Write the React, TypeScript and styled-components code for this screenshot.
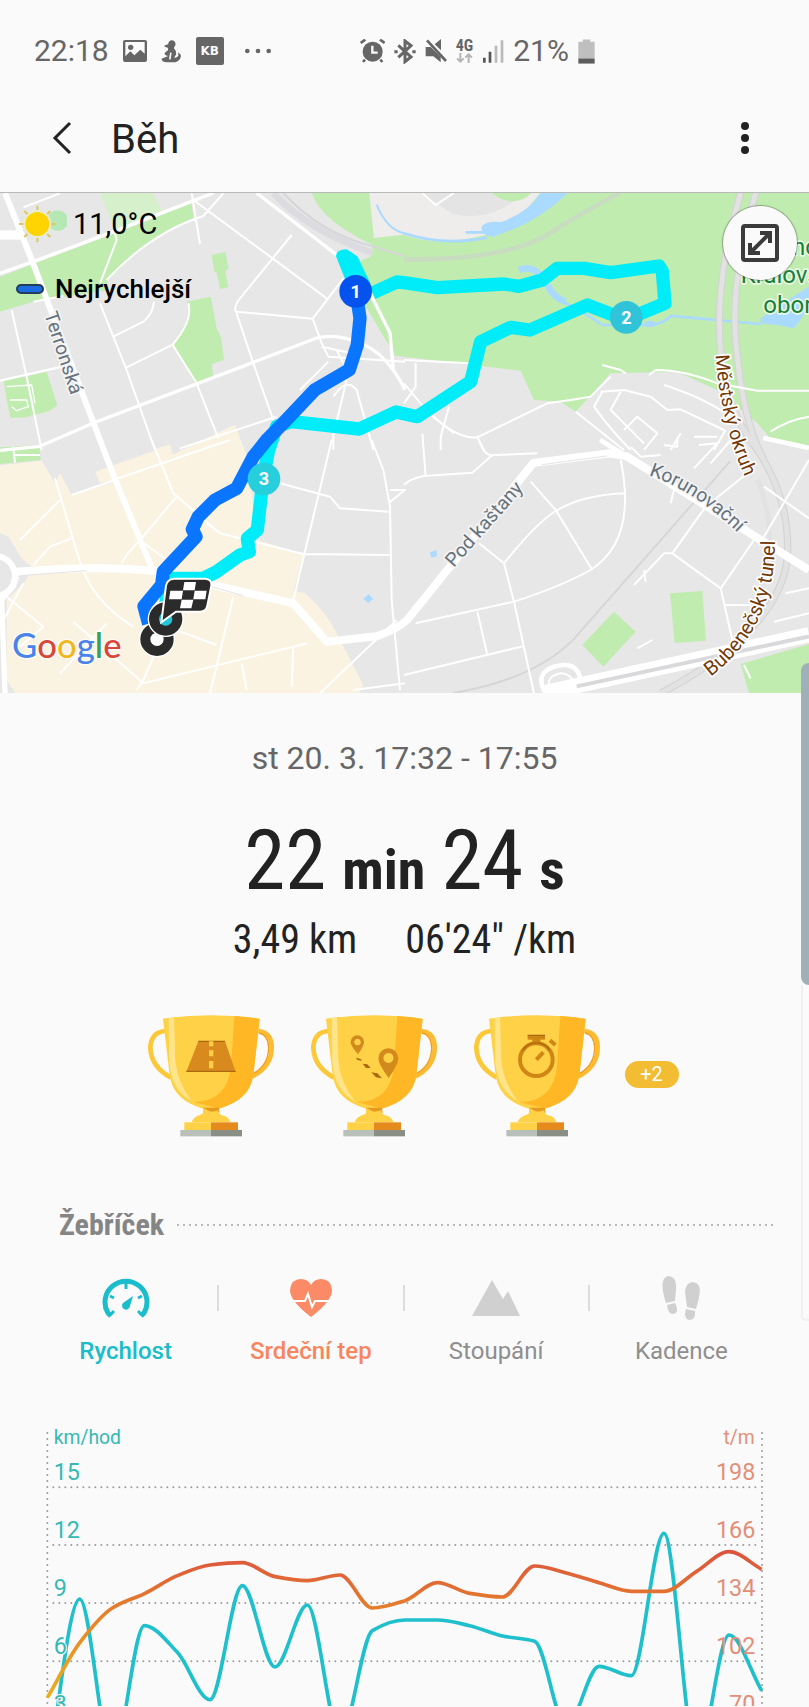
import React, { useState } from 'react';
import styled, { createGlobalStyle } from 'styled-components';

const GlobalStyle = createGlobalStyle`
  * { box-sizing: border-box; }
  body { margin: 0; background: #fafafa; }
  button { font: inherit; color: inherit; border: 0; padding: 0; background: none; cursor: pointer; }
`;

const CONDENSED = '"Roboto Condensed", Roboto, sans-serif';

const Screen = styled.main`
  position: relative;
  background: #fafafa;
  color: #222;
  font-family: Roboto, sans-serif;
  overflow: hidden;
`;

/* ---------- status bar ---------- */

const StatusBar = styled.div`
  display: flex;
  align-items: center;
  padding: 34px 34px 16px;
  color: #666;
  font-size: 30px;
  line-height: 34px;
`;

const StatusGroup = styled.div<{ $gap: number; $start?: number }>`
  display: flex;
  align-items: center;
  gap: ${(p) => p.$gap}px;
  margin-left: ${(p) => p.$start ?? 0}px;
`;

const Glyph = styled.svg<{ $w: number; $h: number }>`
  display: block;
  flex: none;
  width: ${(p) => p.$w}px;
  height: ${(p) => p.$h}px;
`;

const AppBadge = styled.span`
  width: 28px;
  height: 28px;
  border-radius: 2px;
  background: #666;
  color: #fafafa;
  font: 700 12px/28px "DejaVu Sans", sans-serif;
  text-align: center;
`;

const Network = styled.div`
  display: flex;
  flex-direction: column;
  align-items: center;
  font: 700 16px/14px "Roboto Condensed", sans-serif;
`;

/* ---------- header ---------- */

const Header = styled.header`
  display: flex;
  align-items: center;
  height: 109px;
  padding: 0 44px 0 42px;
  border-bottom: 1px solid #b9b9b9;
`;

const IconButton = styled.button`
  display: flex;
  align-items: center;
  justify-content: center;
  width: 40px;
  height: 48px;
`;

const Title = styled.h1`
  flex: 1;
  margin: 4px 0 0 29px;
  font-size: 40px;
  font-weight: 400;
  line-height: 48px;
`;

/* ---------- map ---------- */

const MapPanel = styled.section`
  position: relative;
`;

const Drawing = styled.svg`
  display: block;
  width: 100%;
  height: auto;
`;

const MapInfo = styled.div`
  position: absolute;
  top: 11px;
  left: 16px;
  display: flex;
  flex-direction: column;
  gap: 29px;
  color: #000;
`;

const InfoRow = styled.div<{ $gap: number; $size: number; $weight?: number }>`
  display: flex;
  align-items: center;
  gap: ${(p) => p.$gap}px;
  font-size: ${(p) => p.$size}px;
  font-weight: ${(p) => p.$weight ?? 400};
  line-height: 32px;
`;

const FastChip = styled.span`
  width: 28px;
  height: 10px;
  border: 2px solid #243c5c;
  border-radius: 5px;
  background: #1a6ae0;
`;

const ExpandButton = styled.button`
  position: absolute;
  top: 13px;
  right: 12px;
  display: flex;
  align-items: center;
  justify-content: center;
  width: 74px;
  height: 74px;
  border-radius: 50%;
  background: #fafafa;
  box-shadow: 0 0 1px 1px rgba(0, 0, 0, 0.3);
`;

/* ---------- summary ---------- */

const Summary = styled.section`
  display: flex;
  flex-direction: column;
  align-items: center;
  padding-top: 45px;
`;

const DateLine = styled.time`
  color: #666;
  font-size: 32px;
  line-height: 40px;
`;

const Duration = styled.div`
  display: flex;
  align-items: baseline;
  gap: 16px;
  margin-top: 35px;
  font: 400 83px/96px ${CONDENSED};
`;

const Unit = styled.b`
  font-size: 56px;
  font-weight: 700;
  line-height: 60px;
`;

const Stats = styled.div`
  display: flex;
  gap: 48px;
  margin-top: 7px;
  font: 400 40px/48px ${CONDENSED};
`;

const Trophies = styled.div`
  display: flex;
  align-items: center;
  gap: 35px;
  margin-top: 50px;
  padding-left: 16px;
`;

const MoreBadge = styled.button`
  width: 54px;
  height: 27px;
  margin: 0 0 3px -11px;
  border-radius: 14px;
  background: #f2bc33;
  color: #fff;
  font-size: 20px;
  line-height: 27px;
`;

/* ---------- ranking ---------- */

const SectionHead = styled.div`
  display: flex;
  align-items: center;
  gap: 13px;
  margin-top: 70px;
  padding: 0 36px 0 59px;
`;

const SectionTitle = styled.h2`
  margin: 0;
  color: #858585;
  font: 700 30px/36px ${CONDENSED};
`;

const DottedRule = styled.span`
  flex: 1;
  height: 2px;
  background: repeating-linear-gradient(90deg, #b9b9b9 0 2px, transparent 2px 6px);
`;

const Tabs = styled.div`
  display: flex;
  margin-top: 33px;
  padding: 0 35px 0 33px;
`;

const TabButton = styled.button<{ $color: string; $on: boolean }>`
  flex: 1;
  display: flex;
  flex-direction: column;
  align-items: center;
  gap: 17px;
  color: ${(p) => p.$color};
  font-size: 24px;
  font-weight: ${(p) => (p.$on ? 500 : 400)};
  line-height: 28px;
`;

const Divider = styled.span`
  width: 2px;
  height: 26px;
  margin: 9px -1px 0;
  background: #dcdcdc;
`;

const ChartPanel = styled.section`
  margin: 44px 30px 0;
`;

const ScrollThumb = styled.span`
  position: absolute;
  top: 663px;
  right: 0;
  width: 8px;
  height: 322px;
  border-radius: 8px 0 0 8px;
  background: #9fb0b9;
`;

const ScrollTrack = styled.span`
  position: absolute;
  top: 985px;
  right: 0;
  width: 8px;
  height: 336px;
  border: 2px solid #f0f0f0;
  border-top: 0;
  border-right: 0;
  border-radius: 0 0 0 5px;
`;

/* ---------- map drawing ---------- */

const CYAN_ROUTE =
  'M1118 300L1190 267L1212 269L1312 284L1512 273L1557 280L1627 261L1672 226L1752 226L1832 239L1977 219L1987 235L1995 331L1877 380L1762 336L1590 411L1532 403L1442 446L1412 566L1252 671L1188 657L1078 708L875 686L830 700L806 771L790 851L772 1011L742 1036L748 1076L720 1086L650 1136L610 1156L510 1156L490 1280';
const BLUE_ROUTE =
  'M1068 296L1080 375L1072 455L1048 530L945 590L860 680L800 741L760 791L710 886L645 921L595 971L577 1009L588 1031L490 1136L485 1176L432 1240L446 1292';

const MapDrawing = () => (
  <Drawing viewBox="0 0 2427 1500" role="img" aria-label="Mapa trasy běhu">
    <defs>
      <path id="terronska" d="M132 372L215 625" />
      <path id="kastany" d="M149 384L363 142" />
      <path id="korun" d="M734 106Q866 148 1006 283" />
      <path id="okruh" d="M2147 486Q2160 690 2243 870" />
      <path id="tunel" d="M920 710Q1118 560 1113 290" />
    </defs>
    <rect width="2427" height="1500" fill="#e7e7e7" />

    {/* land use */}
    <g fill="#c0ecb0">
      <g transform="translate(0 -9)">
        <path d="M0 260L105 220L345 130L575 40L580 85L520 110Q430 160 320 275L325 300L100 335L0 365Z" />
        <path d="M635 195L676 186L686 236L676 242L685 292L660 297L650 248L642 244Z" />
        <path d="M560 335L632 320L650 415L664 445L672 510L635 522L640 562L586 582L518 464Q570 390 568 350Z" />
        <path d="M12 572L140 546L172 645L150 662L78 682L32 684L20 630Z" />
        <path d="M0 772L115 766L118 780H0Z" />
        <path d="M300 9H460L485 62L345 120Z" fill="#d5f0cb" />
        <path d="M936 9H1110L1122 145L1215 120V500L1185 497L1095 345L1040 230L1110 200L1118 165Q960 90 936 9Z" />
      </g>
      <g transform="translate(1212 -9)">
        <path d="M0 9H1215V780L1100 745L1060 700L1000 650L960 610L820 545L620 550L575 600L515 665L470 635L390 630L350 542L0 500Z" />
        <path d="M1060 640L1110 750L1215 765V600Z" />
      </g>
      <g transform="translate(0 741)">
        <path d="M0 25L118 15L122 60L0 72Z" />
      </g>
      <g transform="translate(1212 741)">
        <path d="M535 614L630 515L695 575L598 680Z" />
        <path d="M798 460L895 453L906 602L812 609Z" />
        <path d="M1010 672L1215 612V760H1035Z" />
        <path d="M1085 0H1215V22Z" />
      </g>
    </g>
    <path d="M1108 0H1620Q1540 110 1430 132Q1310 160 1212 125L1122 135Z" fill="#eeedeb" />
    <path d="M1260 0H1570Q1480 90 1360 64Z" fill="#e4e4e4" />
    <path d="M1475 0H1595Q1540 50 1475 0Z" fill="#c0ecb0" />
    <path d="M1940 640L2010 590L2060 640L2190 690L2140 640L2040 555L1830 541Z" fill="#e7e7e7" />
    <g transform="translate(0 741)" fill="#faf3e1">
      <path d="M0 76L125 62L165 130L180 100L215 165L345 125L300 128L285 95L470 30L510 14L518 44L690 -40L705 -45L745 60L770 300L912 342L880 452L915 460Q985 520 1020 600L1090 735L1075 765H50L20 720V480L75 425L100 385L65 355L25 290L0 278Z" />
      <path d="M470 25L510 14L518 44L480 55Z" />
    </g>

    {/* water */}
    <g transform="translate(1212 -9)" fill="#aadaff">
      <path d="M410 9H490Q400 100 265 140Q225 135 234 108Q250 92 290 96Q370 70 410 9Z" />
      <path d="M1070 385L1150 330L1215 290V350L1185 395L1170 415L1120 405L1070 400Z" />
      <path
        d="M0 130Q120 170 250 142M185 127H240M345 240Q390 225 420 275Q440 330 485 340Q530 360 595 405L740 405Q780 400 800 378L1070 402"
        fill="none"
        stroke="#aadaff"
        strokeWidth="8"
      />
      <path d="M345 240Q380 225 410 255M430 285Q450 325 485 335" fill="none" stroke="#aadaff" strokeWidth="20" />
      <ellipse cx="738" cy="402" rx="18" ry="10" />
    </g>
    <path d="M1130 35Q1160 110 1215 122" fill="none" stroke="#aadaff" strokeWidth="6" />
    <path d="M1290 1078L1310 1072L1310 1090L1294 1094Z" fill="#aadaff" />
    <path d="M1090 1217L1105 1204L1120 1217L1105 1230Z" fill="#aadaff" />

    {/* railways and tunnels */}
    <g fill="none" stroke="#d6d6d8" strokeWidth="6">
      <path d="M820 0Q920 110 1118 180" stroke="#dcdce0" strokeWidth="20" />
      <path d="M850 0Q960 120 1118 160L1215 190" />
      <path d="M1212 200Q1530 200 1650 120Q1760 50 1860 0" stroke="#c8dcc0" strokeWidth="14" />
      <path d="M1360 1500Q1600 1460 1720 1340L2190 805" />
    </g>
    <g transform="translate(1212 -9)" fill="none" stroke="#d4d4d4" strokeWidth="22">
      <path d="M1010 9Q930 280 950 480Q960 650 1060 780Q1160 930 1150 1100Q1130 1320 770 1510" />
      <path d="M1055 9Q970 300 1000 500Q1020 700 1080 810" />
      <path
        d="M1010 9Q930 280 950 480Q960 650 1060 780Q1160 930 1150 1100Q1130 1320 770 1510M1055 9Q970 300 1000 500Q1020 700 1080 810M1062 870Q1110 1000 1090 1100Q1060 1330 900 1440"
        stroke="#e2e2e2"
        strokeWidth="15"
      />
    </g>

    {/* minor streets */}
    <g fill="none" stroke="#fff" strokeWidth="6" strokeLinejoin="round">
      <g transform="translate(0 -9)">
        <path d="M70 52L180 10M575 10L600 162M100 335L190 318M300 280L350 150L345 130M320 270Q450 130 610 78L670 10M580 30L960 310L985 330M875 135L720 325Q700 350 708 365L938 386M708 365L760 520L820 690M938 386L1030 265M938 386L965 460L985 500L1215 515M35 360L80 560L125 780M300 340L380 540L465 780M340 440L430 395Q460 370 462 335M380 532L518 464Q580 390 565 340M518 464L590 580L655 745M540 775L830 680M1000 780V735L1040 570M1120 780L1070 600Q1040 560 1000 620M965 470L1080 495M1010 480L1030 520M985 515L900 600" />
        <path d="M20 590L95 585L105 640M30 630H80L85 650L50 662L35 650" strokeWidth="4" />
      </g>
      <g transform="translate(1212 -9)">
        <path d="M55 9L95 45L150 9M0 510L200 520M35 520V590L0 640M0 580L50 640Q150 750 220 742L430 640L500 630L560 620L620 560M220 742L240 780M135 650L110 740V780M80 675L150 730M595 525L650 540L665 550M735 555L755 540Q840 540 940 580L1060 602H1215M590 605L660 600L740 620L790 660L830 658L960 720M780 585Q920 630 990 690M595 605L570 650Q620 720 680 780M515 665L660 780M660 720L700 680L760 730L720 780M1100 725Q1150 690 1215 680M870 740L940 740M830 730L800 780M650 605L620 660L720 760M930 780L965 720" />
      </g>
      <g transform="translate(0 741)">
        <path d="M455 0L520 160L660 280L910 342L1170 345M340 120L690 0M215 165L345 120M530 170L420 300L500 360M40 20L45 68M45 45H120M165 115L235 350Q270 480 400 560M180 180L60 300M215 295L150 320L100 375M420 300Q380 340 365 370M620 250L660 280M995 0L880 480M840 130L990 170L1020 205L1165 215M1115 0L1150 90L1170 200L1175 480L1200 750M1170 150H1215L1165 190M700 470L630 760M650 615L500 560L430 720L410 750M0 560L70 430M20 470L130 560L60 620M220 545L430 730L880 620L920 610M725 670L740 750M880 620L875 740M1190 540L960 760M1060 750L1215 730M320 550L180 700" />
      </g>
      <g transform="translate(1212 741)">
        <path d="M55 -20L65 110M225 0Q240 50 270 45L400 40M265 45L205 98L60 108Q20 115 0 135M380 125L455 210L565 390M650 60Q700 300 560 390Q470 440 330 485L35 550M660 160Q540 165 460 210Q400 245 300 370M225 310L300 370L330 485L390 760M220 515L250 645M0 705L360 618M590 0L660 50M680 20L710 50L770 45M820 0V20L780 15M885 15L940 10L870 85M810 150L800 190M1030 100L905 200L805 340L780 340L690 435M805 340L950 445L1050 300M950 445L985 600M965 495H1040M1215 60L1080 290M1080 140L1215 235M1110 545L1215 520M1145 460L1215 445M720 390L725 425M700 625L745 600M980 0L920 70M1020 675L1040 715" />
        <path d="M425 760Q390 700 450 680Q520 660 530 720" strokeWidth="14" />
        <path d="M440 750Q420 710 470 700Q500 700 510 730" strokeWidth="6" />
      </g>
    </g>

    {/* main streets */}
    <g fill="none" stroke="#fff" strokeLinejoin="round">
      <g strokeWidth="10">
        <path d="M0 241L100 206L350 112L640 0M770 0L1080 240L1170 420L1180 530M0 772L120 760L280 690L760 508L950 435Q1010 420 1080 450Q1160 480 1215 590" />
        <path d="M0 563L190 520" strokeWidth="7" />
      </g>
      <path d="M15 0L95 200L300 741L342 851L460 1136" strokeWidth="18" />
      <path d="M0 126H60" strokeWidth="28" />
      <circle cx="-15" cy="1149" r="60" strokeWidth="18" fill="#e7e7e7" />
      <path d="M50 1150L40 1180L5 1220L15 1500" strokeWidth="16" />
      <path d="M40 1137Q300 1115 470 1135L640 1176L880 1231L980 1346L1130 1330Q1190 1310 1222 1280L1600 810L1830 781L1880 790L2427 1131" strokeWidth="24" />
      <path d="M1800 741L1880 790M2290 735L2427 765" strokeWidth="14" />
      <path d="M1630 1500L2427 1325" strokeWidth="46" />
      <path d="M1730 1480L2427 1330" stroke="#d9d9dc" strokeWidth="12" />
    </g>
    <path d="M60 1148L260 1133M1625 815L1820 789M730 1208L630 1180" fill="none" stroke="#e4e4e4" strokeWidth="3" />

    {/* labels */}
    <g fontFamily="Roboto, sans-serif" fontSize="58" strokeLinejoin="round" paintOrder="stroke" strokeWidth="10">
      <g fill="#66727c" stroke="#f4f4f4">
        <g transform="translate(0 -9)">
          <text><textPath href="#terronska">Terronská</textPath></text>
        </g>
        <g transform="translate(1212 741)">
          <text><textPath href="#kastany">Pod kaštany</textPath></text>
          <text><textPath href="#korun">Korunovační</textPath></text>
        </g>
      </g>
      <g fill="#733a08" stroke="#fff">
        <text><textPath href="#okruh">Městský okruh</textPath></text>
        <g transform="translate(1212 741)">
          <text fontSize="60"><textPath href="#tunel">Bubenečský tunel</textPath></text>
        </g>
      </g>
      <g fill="#17803a" stroke="#e9f8e2" fontSize="72">
        <text x="2376" y="185">no</text>
        <text x="2222" y="271">Královská</text>
        <text x="2290" y="361">obora</text>
      </g>
    </g>

    {/* route */}
    <g fill="none" strokeWidth="40" strokeLinejoin="round">
      <path d={CYAN_ROUTE} stroke="#00ecf8" />
      <path d="M1008 190Q1008 170 1040 169L1072 190L1112 272L1060 320Z" fill="#00ecf8" />
      <path d={BLUE_ROUTE} stroke="#0a76ff" />
    </g>
    <g fontFamily="Roboto, sans-serif" fontWeight="700" fontSize="54" textAnchor="middle" fill="#fff">
      <circle cx="1067" cy="295" r="49" fill="#0652ef" />
      <text x="1067" y="314">1</text>
      <circle cx="1879" cy="373" r="49" fill="#31c3d8" />
      <text x="1879" y="392">2</text>
      <circle cx="792" cy="858" r="49" fill="#27cfdd" />
      <text x="792" y="876">3</text>
    </g>
    <g fill="#fff" stroke="#2b2b2b" strokeWidth="30">
      <circle cx="471" cy="1339" r="54" stroke="none" />
      <circle cx="471" cy="1339" r="35" />
      <circle cx="497" cy="1278" r="54" stroke="none" />
      <circle cx="497" cy="1278" r="35" fill="#1fc9d9" />
    </g>
    <path
      d="M522 1157H615Q636 1158 634 1178L622 1238Q618 1256 600 1256H528L484 1288L498 1178Q502 1158 522 1157Z"
      fill="#2b2b2b"
      stroke="#fff"
      strokeWidth="6"
    />
    <path d="M553 1167L588 1167L584 1192L549 1192ZM511 1193L549 1193L545 1219L507 1219ZM584 1193L620 1193L616 1219L580 1219ZM545 1220L580 1220L574 1246L540 1246Z" fill="#fff" />
    <text x="36" y="1394" fontFamily="Lato, sans-serif" fontWeight="500" fontSize="104" paintOrder="stroke" stroke="#fff" strokeWidth="8" strokeOpacity="0.7">
      <tspan fill="#4a84e8">G</tspan>
      <tspan fill="#d8473a">o</tspan>
      <tspan fill="#f0b820">o</tspan>
      <tspan fill="#4a84e8">g</tspan>
      <tspan fill="#38a055">l</tspan>
      <tspan fill="#d8473a">e</tspan>
    </text>
  </Drawing>
);

/* ---------- trophies ---------- */

const RoadMark = () => (
  <g>
    <path d="M204 123H284L316 214H168Z" fill="#d98a1f" />
    <path d="M204 123H284M168 213H316" stroke="#a8690f" strokeWidth="4" />
    <path d="M236 123H249V138H236ZM236 150H249V168H236ZM236 182H249V204H236Z" fill="#ffd046" />
  </g>
);

const RouteMark = () => (
  <g fill="#d28a1c" transform="translate(-488 0)">
    <path fillRule="evenodd" d="M680 105a20 20 0 0 1 20 20q0 12-18 37q-22-25-22-37a20 20 0 0 1 20-20zm0 10a10 10 0 1 0 1 0z" />
    <path fillRule="evenodd" d="M773 144a30 30 0 0 1 30 30q0 18-29 59q-31-41-31-59a30 30 0 0 1 30-30zm0 14a15 15 0 1 0 1 0z" />
    <path d="M676 172L690 176L694 181L680 179ZM696 190L710 192L720 203L706 203ZM722 216L740 219L754 234L736 231Z" fill="#a8690f" />
  </g>
);

const WatchMark = () => (
  <g fill="none" stroke="#cf8614" transform="translate(-167 0)">
    <circle cx="407" cy="178" r="49" strokeWidth="12" />
    <path d="M381 111H433" strokeWidth="14" />
    <path d="M407 114V128" strokeWidth="24" />
    <path d="M448 120L464 134M407 178L428 156" strokeWidth="12" />
    <path d="M381 105H433M366 150A49 49 0 0 1 448 150" stroke="#a8690f" strokeWidth="4" />
  </g>
);

const Trophy = ({ label, children }: { label: string; children: React.ReactNode }) => (
  <Glyph $w={128} $h={123} viewBox="50 41 384 369" role="img" aria-label={label}>
    <path d="M104 92Q62 96 60 142Q62 200 122 232" fill="none" stroke="#fdc838" strokeWidth="14" />
    <path d="M384 92Q424 96 424 142Q424 198 366 228" fill="none" stroke="#fdbb31" strokeWidth="14" />
    <path d="M386 98Q414 104 415 142Q414 194 370 219" fill="none" stroke="#eea022" strokeWidth="4" />
    <path d="M98 55Q240 34 388 55L369 225Q358 300 265 325V340H218V325Q128 300 118 225Z" fill="#ffd146" />
    <path d="M312 47Q350 49 388 56L369 225Q358 300 265 325L240 318L190 305Q290 305 302 200Z" fill="#ffb726" />
    <path d="M115 53L131 51L135 180Q142 250 185 303Q125 270 117 190Z" fill="#ffe48a" />
    <path d="M218 322L266 322L268 338L240 334Z" fill="#e79a20" />
    <path d="M222 330Q242 338 264 330Q262 344 284 347Q298 354 300 366H184Q188 352 202 346Q222 342 222 330Z" fill="#ffd146" />
    <path d="M162 366H242V389H162Z" fill="#ffd146" />
    <path d="M242 366H323V389H242Z" fill="#e58a1c" />
    <path d="M150 389H242V408H150Z" fill="#b9c0ba" />
    <path d="M242 389H335V408H242Z" fill="#8a8f86" />
    {children}
  </Glyph>
);

/* ---------- tabs ---------- */

const TEAL = '#1bbccb';
const CORAL = '#f9855f';

const TABS = [
  {
    label: 'Rychlost',
    color: TEAL,
    iconColor: TEAL,
    on: true,
    icon: (
      <>
        <path d="M9 40L6 37A21 21 0 1 1 42 37L39 40" fill="none" stroke="currentColor" strokeWidth="5" strokeLinejoin="round" />
        <path d="M24 7V13M8 20L12 22M40 20L36 22M8 39L12 35M40 39L36 35" fill="none" stroke="currentColor" strokeWidth="3" />
        <path d="M31 20L28 30A4 4 0 1 1 21 27Z" fill="currentColor" />
      </>
    ),
  },
  {
    label: 'Srdeční tep',
    color: CORAL,
    iconColor: '#fb8a66',
    on: true,
    icon: (
      <>
        <path d="M24 41Q3 25 3 14Q4 3 14 3Q21 3 24 9Q27 3 34 3Q44 3 45 14Q45 25 24 41Z" fill="currentColor" />
        <path d="M6 25H18L21 18L25 31L28 25H42" fill="none" stroke="#fff" strokeWidth="2" />
      </>
    ),
  },
  {
    label: 'Stoupání',
    color: '#8e8e8e',
    iconColor: '#d0d0d0',
    on: false,
    icon: <path d="M0 40L20 4L31 23L36 15L48 40Z" fill="currentColor" />,
  },
  {
    label: 'Kadence',
    color: '#8e8e8e',
    iconColor: '#d0d0d0',
    on: false,
    icon: (
      <>
        <path d="M12 0Q20 1 19 13L18 25L9 27Q4 12 6 5Q8 0 12 0ZM10 29L18 27Q23 37 16 38Q11 38 10 29Z" fill="currentColor" />
        <path d="M36 6Q43 7 43 15Q42 24 39 33L30 31L28 16Q29 6 36 6ZM29 33L38 35Q39 44 32 44Q26 42 29 33Z" fill="currentColor" />
      </>
    ),
  },
];

/* ---------- chart ---------- */

type Point = [number, number];

const SPEED: Point[] = [
  [52, 1100], [149, 570], [247, 1050], [343, 650], [442, 730], [540, 872], [637, 530], [735, 774],
  [832, 588], [930, 985], [1027, 665], [1125, 633], [1222, 633], [1319, 650], [1417, 681], [1514, 697],
  [1609, 953], [1707, 772], [1804, 800], [1902, 373], [2000, 1050], [2097, 678], [2195, 845],
];
const PULSE: Point[] = [
  [52, 866], [150, 700], [247, 597], [345, 553], [442, 500], [540, 468], [637, 461], [735, 503],
  [832, 515], [930, 498], [1027, 597], [1125, 575], [1222, 521], [1319, 553], [1417, 564], [1514, 471],
  [1609, 492], [1707, 521], [1804, 547], [1902, 547], [2000, 487], [2097, 428], [2195, 481],
];

/** Monotone cubic curve: no overshoot, level at every peak and trough. */
function curve(points: Point[]): string {
  const slope = (i: number) => (points[i + 1][1] - points[i][1]) / (points[i + 1][0] - points[i][0]);
  const tangents = points.map((_, i) => {
    if (i === 0) return slope(0);
    if (i === points.length - 1) return slope(i - 1);
    const a = slope(i - 1);
    const b = slope(i);
    return a * b <= 0 ? 0 : (2 * a * b) / (a + b);
  });
  return points.slice(1).reduce((d, [x, y], i) => {
    const [px, py] = points[i];
    const h = (x - px) / 3;
    return `${d}C${px + h} ${py + tangents[i] * h} ${x - h} ${y - tangents[i + 1] * h} ${x} ${y}`;
  }, `M${points[0][0]} ${points[0][1]}`);
}

const ROWS = [
  { y: 235, speed: '15', pulse: '198' },
  { y: 408, speed: '12', pulse: '166' },
  { y: 582, speed: '9', pulse: '134' },
  { y: 757, speed: '6', pulse: '102' },
  { y: 931, speed: '3', pulse: '70' },
];

const Chart = () => (
  <Drawing viewBox="0 0 2247 891" role="img" aria-label="Rychlost a srdeční tep">
    <defs>
      <linearGradient id="pulse" gradientUnits="userSpaceOnUse" x1="0" y1="866" x2="0" y2="425">
        <stop offset="0" stopColor="#e9b01f" />
        <stop offset="0.6" stopColor="#e57f2c" />
        <stop offset="1" stopColor="#dc523e" />
      </linearGradient>
    </defs>
    <g stroke="#9c9c9c" strokeWidth="6" strokeLinecap="round" strokeDasharray="0 18">
      <path d="M52 72V891M2196 72V891" />
      {ROWS.map((r) => <path key={r.y} d={`M70 ${r.y}H2180`} />)}
    </g>
    <path d={curve(SPEED)} fill="none" stroke="#1fbfcc" strokeWidth="11" />
    <g fontFamily="Roboto, sans-serif" fontSize="70" paintOrder="stroke" stroke="#fafafa" strokeWidth="6">
      <g fill="#35b9b5">
        <text x="71" y="104" fontSize="58">km/hod</text>
        {ROWS.map((r) => <text key={r.y} x="71" y={r.y - 22}>{r.speed}</text>)}
      </g>
      <g fill="#e28f78" textAnchor="end">
        <text x="2174" y="104" fontSize="58">t/m</text>
        {ROWS.map((r) => <text key={r.y} x="2176" y={r.y - 22} strokeWidth="0">{r.pulse}</text>)}
      </g>
    </g>
    <path d={curve(PULSE)} fill="none" stroke="url(#pulse)" strokeWidth="11" />
  </Drawing>
);

/* ---------- page ---------- */

const StatusIcons = () => (
  <StatusGroup $gap={9} $start={84}>
    <Glyph $w={25} $h={24} viewBox="751 38 75 72" fill="#666">
      <circle cx="789" cy="76" r="30" />
      <path d="M753 50L767 40M825 50L811 40M766 100L760 107M812 100L818 107" stroke="#666" strokeWidth="8" />
      <path d="M788 58V79H804" fill="none" stroke="#fafafa" strokeWidth="7" />
    </Glyph>
    <Glyph $w={22} $h={25} viewBox="847 37 66 75" fill="none" stroke="#666" strokeWidth="9">
      <path d="M860 56L898 91L880 105V43L898 57L860 92" />
      <path d="M848 75H858M902 75H912" />
    </Glyph>
    <Glyph $w={22} $h={24} viewBox="937 38 66 72" fill="#666">
      <path d="M939 62H954L984 92V108L962 90H939ZM966 54L985 38V72Z" />
      <path d="M943 42L1000 104" stroke="#666" strokeWidth="8" />
    </Glyph>
    <Network>
      4G
      <Glyph $w={17} $h={10} viewBox="0 0 51 30" fill="none" stroke="#b5b5b5" strokeWidth="6">
        <path d="M13 0V26M3 16L13 26L23 16M38 30V4M28 14L38 4L48 14" />
      </Glyph>
    </Network>
    <Glyph $w={22} $h={23} viewBox="1121 40 66 69" fill="#b9b9b9">
      <path d="M1124 93H1132V108H1124ZM1141 75H1149V108H1141Z" fill="#555" />
      <path d="M1159 57H1167V108H1159ZM1177 41H1185V108H1177Z" />
    </Glyph>
    <span>21%</span>
    <Glyph $w={17} $h={25} viewBox="1397 38 50 73">
      <path d="M1398 46H1411V39H1433V46H1446V95H1398Z" fill="#bfbfbf" />
      <path d="M1398 95H1446V110H1398Z" fill="#5c5c5c" />
    </Glyph>
  </StatusGroup>
);

export default function App() {
  const [tab, setTab] = useState('Rychlost');
  return (
    <Screen>
      <GlobalStyle />
      <StatusBar>
        <StatusGroup $gap={14}>
          <span>22:18</span>
          <Glyph $w={24} $h={22} viewBox="36 41 72 66" fill="#666">
            <path fillRule="evenodd" d="M42 41H102Q108 41 108 47V101Q108 107 102 107H42Q36 107 36 101V47Q36 41 42 41ZM43 47V90L58 75L70 87L88 70L101 82V47Z" />
            <circle cx="59" cy="63" r="8" />
          </Glyph>
          <Glyph $w={21} $h={23} viewBox="155 40 62 69" fill="#666">
            <path d="M188 41Q199 43 198 55L193 64Q201 72 200 83L194 93Q204 95 207 86L205 77L214 84Q216 100 198 107H172Q156 105 156 96L176 88Q162 84 166 78L176 70L175 63L165 60Q164 55 176 53Q177 41 188 41Z" />
            <path d="M184 78L181 98" stroke="#fafafa" strokeWidth="5" />
          </Glyph>
          <AppBadge>KB</AppBadge>
          <Glyph $w={38} $h={6} viewBox="381 64 114 18" fill="#666">
            <circle cx="409" cy="73" r="7" />
            <circle cx="441" cy="73" r="7" />
            <circle cx="473" cy="73" r="7" />
          </Glyph>
        </StatusGroup>
        <StatusIcons />
      </StatusBar>

      <Header>
        <IconButton aria-label="Zpět">
          <Glyph $w={20} $h={34} viewBox="0 0 20 34" fill="none" stroke="#222" strokeWidth="3">
            <path d="M18 2L3 17L18 32" />
          </Glyph>
        </IconButton>
        <Title>Běh</Title>
        <IconButton aria-label="Další možnosti">
          <Glyph $w={8} $h={32} viewBox="0 0 8 32" fill="#222">
            <circle cx="4" cy="4" r="4" />
            <circle cx="4" cy="16" r="4" />
            <circle cx="4" cy="28" r="4" />
          </Glyph>
        </IconButton>
      </Header>

      <MapPanel>
        <MapDrawing />
        <MapInfo>
          <InfoRow $gap={6} $size={29}>
            <Glyph $w={51} $h={40} viewBox="50 45 153 120">
              <circle cx="175" cy="95" r="31" fill="#b5e8b5" />
              <path d="M114 50V160M59 105H169M75 66L153 144M153 66L75 144" stroke="#d9c95e" strokeWidth="6" />
              <circle cx="114" cy="105" r="42" fill="#e9ecd2" />
              <circle cx="114" cy="105" r="36" fill="#ffd400" />
            </Glyph>
            <span>11,0°C</span>
          </InfoRow>
          <InfoRow $gap={11} $size={26} $weight={500}>
            <FastChip />
            <span>Nejrychlejší</span>
          </InfoRow>
        </MapInfo>
        <ExpandButton aria-label="Zvětšit mapu">
          <Glyph $w={38} $h={38} viewBox="0 0 38 38" fill="none" stroke="#3b3b3b">
            <rect x="2" y="2" width="34" height="34" rx="2" strokeWidth="4" />
            <path d="M19 9H29V19M29 9L9 29M9 19V29H19" strokeWidth="4" />
          </Glyph>
        </ExpandButton>
      </MapPanel>

      <Summary>
        <DateLine>st 20. 3. 17:32 - 17:55</DateLine>
        <Duration>
          <span>22</span>
          <Unit>min</Unit>
          <span>24</span>
          <Unit>s</Unit>
        </Duration>
        <Stats>
          <span>3,49 km</span>
          <span>06'24" /km</span>
        </Stats>
        <Trophies>
          <Trophy label="Vzdálenost"><RoadMark /></Trophy>
          <Trophy label="Trasa"><RouteMark /></Trophy>
          <Trophy label="Čas"><WatchMark /></Trophy>
          <MoreBadge>+2</MoreBadge>
        </Trophies>
      </Summary>

      <SectionHead>
        <SectionTitle>Žebříček</SectionTitle>
        <DottedRule />
      </SectionHead>

      <Tabs role="tablist">
        {TABS.map((t, i) => (
          <React.Fragment key={t.label}>
            {i > 0 && <Divider />}
            <TabButton role="tab" aria-selected={tab === t.label} $color={t.color} $on={t.on} onClick={() => setTab(t.label)}>
              <Glyph $w={48} $h={44} viewBox="0 0 48 44" color={t.iconColor}>{t.icon}</Glyph>
              {t.label}
            </TabButton>
          </React.Fragment>
        ))}
      </Tabs>

      <ChartPanel>
        <Chart />
      </ChartPanel>

      <ScrollTrack />
      <ScrollThumb />
    </Screen>
  );
}
